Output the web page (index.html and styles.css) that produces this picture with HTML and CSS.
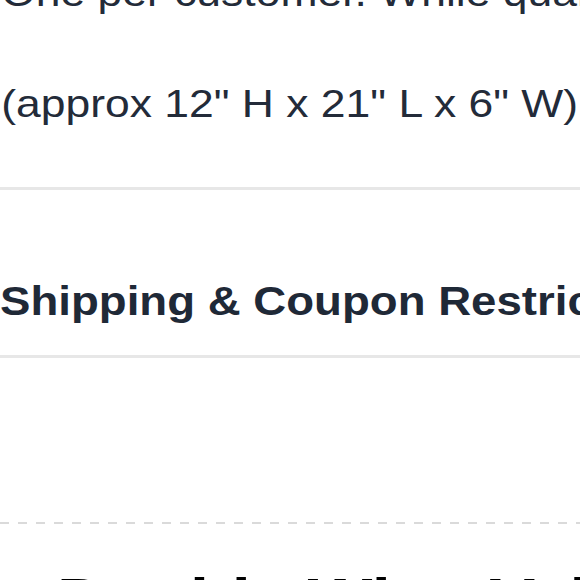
FILE: index.html
```html
<!DOCTYPE html>
<html lang="en">
<head>
    <meta charset="UTF-8">
    <meta name="viewport" content="width=device-width, initial-scale=1.0">
    <title>Product Details</title>
    <link rel="stylesheet" href="styles.css">
</head>
<body>
    <div class="details">
        <p class="note first">One per customer. While quantities last.</p>
        <p class="note">(approx 12" H x 21" L x 6" W)</p>
    </div>

    <div class="section">
        <h2>Shipping &amp; Coupon Restrictions</h2>
    </div>

    <div class="spacer"></div>

    <div class="next-item">
        <h1>Double Wine Value</h1>
    </div>
</body>
</html>
```

FILE: styles.css
```css
* {
    margin: 0;
    padding: 0;
    box-sizing: border-box;
}

html, body {
    overflow: hidden;
}

body {
    font-family: "Liberation Sans", Arial, sans-serif;
    background: #fff;
    color: #232b39;
    width: 580px;
    height: 580px;
}

/* the source renders type a little wider than Arial */
.note, .section h2, .next-item h1 {
    white-space: nowrap;
    transform: scaleX(1.14);
    transform-origin: left center;
}

.details {
    padding-bottom: 60px;
    border-bottom: 3px solid #e7e7e7;
}

.note {
    font-size: 39px;
    line-height: 47px;
    margin-top: 64px;
    padding-left: 1px;
}

.note.first {
    margin-top: -31px;
}

.section {
    padding-top: 87px;
    padding-bottom: 30px;
    border-bottom: 3px solid #e7e7e7;
}

.section h2 {
    font-size: 40px;
    line-height: 48px;
    font-weight: 700;
    color: #1f2937;
}

.spacer {
    height: 166px;
    background: repeating-linear-gradient(90deg, #dadada 0 9px, transparent 9px 18px) bottom / 100% 2px no-repeat;
}

.next-item {
    padding-top: 40px;
    padding-left: 57px;
}

.next-item h1 {
    font-size: 60px;
    line-height: 72px;
    font-weight: 700;
    color: #000;
}
```
